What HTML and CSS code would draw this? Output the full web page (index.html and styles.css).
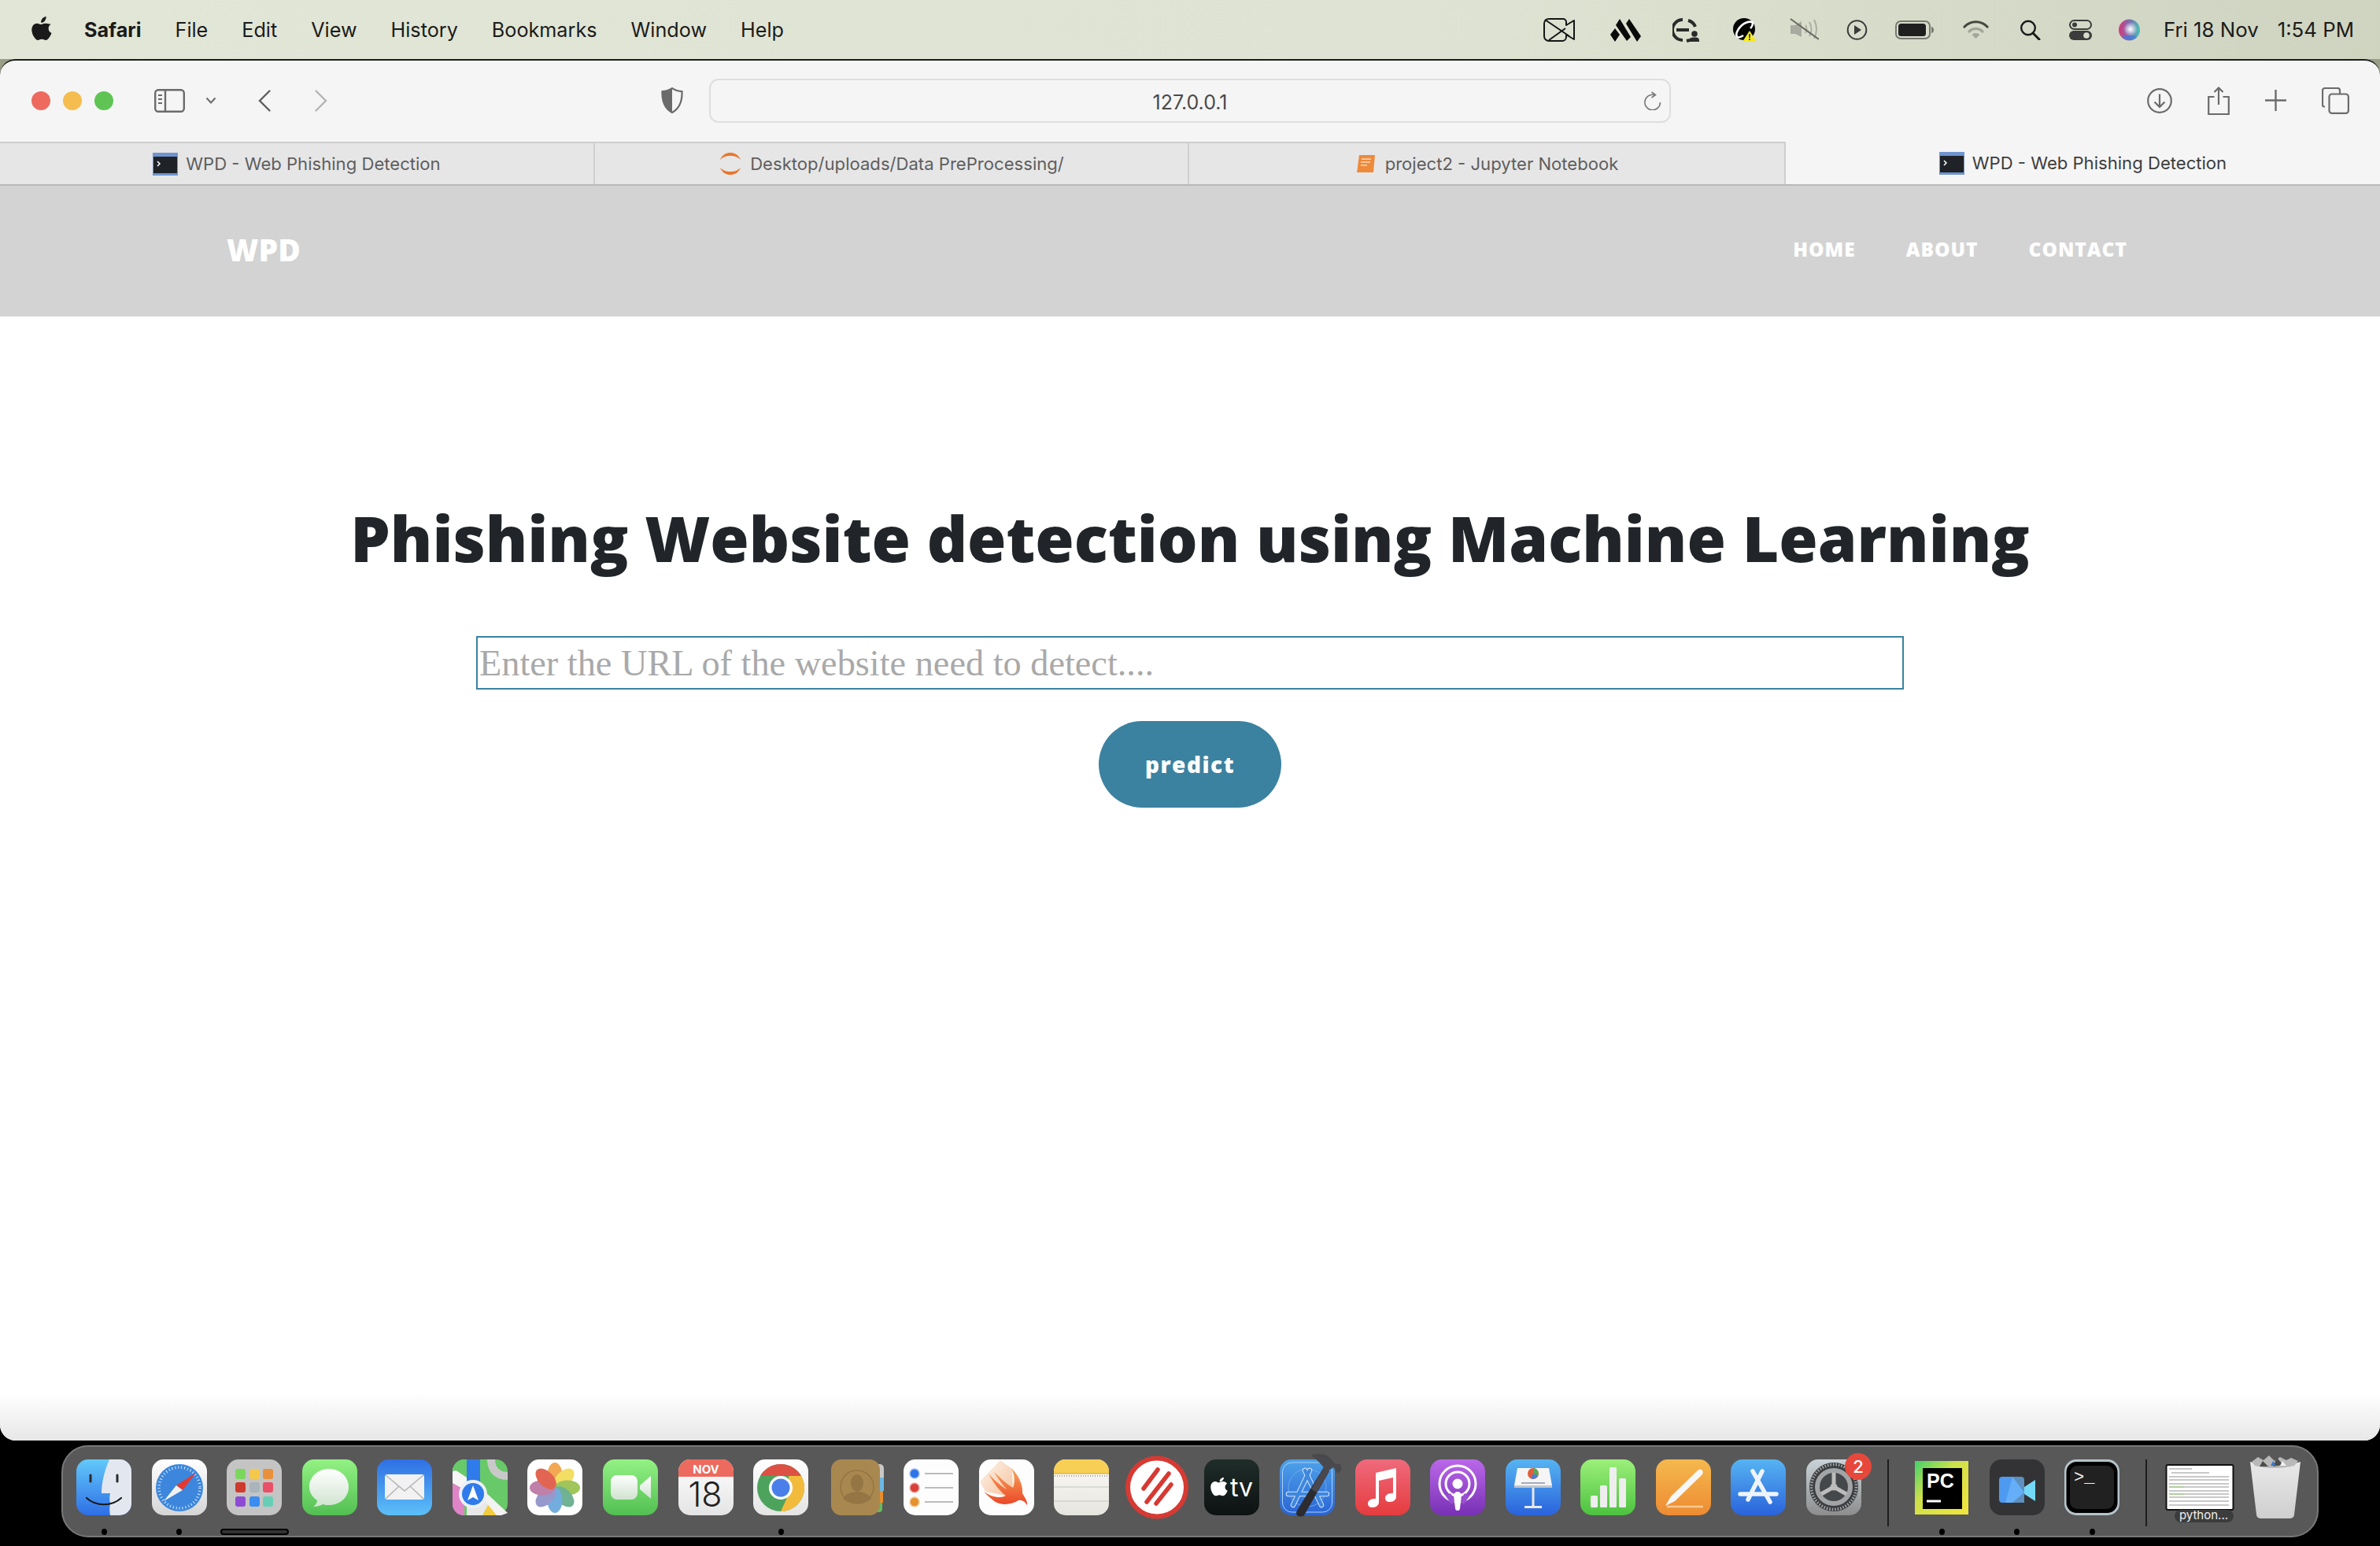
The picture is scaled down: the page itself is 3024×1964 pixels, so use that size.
FILE: index.html
```html
<!DOCTYPE html>
<html lang="en">
<head>
    <meta charset="UTF-8">
    <meta name="viewport" content="width=device-width, initial-scale=1.0">
    <title>WPD - Web Phishing Detection</title>
    <link rel="stylesheet" href="styles.css">
</head>
<body>
    <svg class="svg-defs" aria-hidden="true">
        <defs>
            <linearGradient id="g-finder" x1="0" y1="0" x2="0" y2="1"><stop offset="0" stop-color="#63c9fa"/><stop offset="1" stop-color="#2e6fe6"/></linearGradient>
            <linearGradient id="g-mail" x1="0" y1="0" x2="0" y2="1"><stop offset="0" stop-color="#2f6fe4"/><stop offset="1" stop-color="#5cc0f8"/></linearGradient>
            <linearGradient id="g-green" x1="0" y1="0" x2="0" y2="1"><stop offset="0" stop-color="#93f283"/><stop offset="1" stop-color="#52bf52"/></linearGradient>
            <linearGradient id="g-bubble" x1="0" y1="0" x2="0" y2="1"><stop offset="0" stop-color="#ffffff"/><stop offset="1" stop-color="#cfe3cf"/></linearGradient>
            <linearGradient id="g-white" x1="0" y1="0" x2="0" y2="1"><stop offset="0" stop-color="#ffffff"/><stop offset="1" stop-color="#e4e4e4"/></linearGradient>
            <linearGradient id="g-safari" x1="0" y1="0" x2="0" y2="1"><stop offset="0" stop-color="#ffffff"/><stop offset="1" stop-color="#d5d5d5"/></linearGradient>
            <linearGradient id="g-blue" x1="0" y1="0" x2="0" y2="1"><stop offset="0" stop-color="#56b4f2"/><stop offset="1" stop-color="#2a63dc"/></linearGradient>
            <linearGradient id="g-music" x1="0" y1="0" x2="0" y2="1"><stop offset="0" stop-color="#ef6a7c"/><stop offset="1" stop-color="#e53c3e"/></linearGradient>
            <linearGradient id="g-pod" x1="0" y1="0" x2="0" y2="1"><stop offset="0" stop-color="#bb68ea"/><stop offset="1" stop-color="#7830b4"/></linearGradient>
            <linearGradient id="g-num" x1="0" y1="0" x2="0" y2="1"><stop offset="0" stop-color="#9cf07a"/><stop offset="1" stop-color="#4cc23f"/></linearGradient>
            <linearGradient id="g-pages" x1="0" y1="0" x2="0" y2="1"><stop offset="0" stop-color="#f5b94e"/><stop offset="1" stop-color="#ee8b32"/></linearGradient>
            <linearGradient id="g-swift" x1="0" y1="0" x2="0" y2="1"><stop offset="0" stop-color="#f8a65a"/><stop offset="1" stop-color="#eb4628"/></linearGradient>
            <linearGradient id="g-swift-fade" x1="0" y1="0" x2="1" y2="1"><stop offset="0" stop-color="#fdf4ee"/><stop offset="1" stop-color="#f6c49f"/></linearGradient>
            <linearGradient id="g-prefs" x1="0" y1="0" x2="0" y2="1"><stop offset="0" stop-color="#c9d3d8"/><stop offset="1" stop-color="#8d8d8d"/></linearGradient>
            <linearGradient id="g-pc" x1="0" y1="0" x2="1" y2="1"><stop offset="0" stop-color="#3fd26a"/><stop offset=".4" stop-color="#cfe04a"/><stop offset="1" stop-color="#f2e53c"/></linearGradient>
            <linearGradient id="g-tv" x1="0" y1="0" x2="0" y2="1"><stop offset="0" stop-color="#1f2d29"/><stop offset="1" stop-color="#0d1212"/></linearGradient>
            <linearGradient id="g-trash" x1="0" y1="0" x2="0" y2="1"><stop offset="0" stop-color="#e9e9e9"/><stop offset="1" stop-color="#cfcfcf"/></linearGradient>
            <linearGradient id="g-notes" x1="0" y1="0" x2="0" y2="1"><stop offset="0" stop-color="#fbfaf6"/><stop offset="1" stop-color="#e6e5df"/></linearGradient>
            <linearGradient id="g-xcode" x1="0" y1="0" x2="0" y2="1"><stop offset="0" stop-color="#4ea2ea"/><stop offset="1" stop-color="#2a64d4"/></linearGradient>
            <linearGradient id="g-siri" x1="0" y1="0" x2="1" y2="0"><stop offset="0" stop-color="#d8387c"/><stop offset=".5" stop-color="#7e6bb0"/><stop offset="1" stop-color="#48c4b4"/></linearGradient>
            <radialGradient id="g-siri-glow"><stop offset="0" stop-color="#fff"/><stop offset=".35" stop-color="#e5eef5" stop-opacity=".8"/><stop offset="1" stop-color="#e5eef5" stop-opacity="0"/></radialGradient>
        </defs>
    </svg>

    <header class="menubar">
        <div class="menu-left">
            <svg class="apple" viewBox="0 0 26 32"><path fill="#1a1a1a" d="M18.6 1c.2 2.200-.6 4-1.700 5.400-1.200 1.400-3 2.500-4.800 2.300-.2-2 .8-4 1.800-5.200C15.100 2.100 17.100 1.100 18.600 1zM24.800 10.800c-2 1.300-3.200 3.100-3.200 5.400 0 2.700 1.600 4.700 3.900 5.700-.6 1.900-1.500 3.700-2.700 5.400-1.500 2.200-2.900 3.700-4.800 3.700-1.900 0-2.600-1.200-4.900-1.200-2.300 0-3.100 1.200-4.900 1.200-1.900 0-3.200-1.700-4.700-3.800C1.500 24.700.3 21 .3 18c0-5.300 3.400-8.200 6.800-8.200 1.900 0 3.500 1.300 4.800 1.300 1.200 0 3-1.400 5.200-1.400 1.500 0 4.800.5 7.700 1.100z"/></svg>
            <span class="menu-app">Safari</span>
            <span>File</span>
            <span>Edit</span>
            <span>View</span>
            <span>History</span>
            <span>Bookmarks</span>
            <span>Window</span>
            <span>Help</span>
        </div>
        <div class="menu-right">
            <svg width="40" height="30" viewBox="0 0 40 30"><g fill="none" stroke="#151515" stroke-width="2" stroke-linejoin="round"><path d="M7 1H25a4 4 0 0 1 4 4v4L39 3V27L29 21v3a5 5 0 0 1-5 5H7a6 6 0 0 1-6-6V7a6 6 0 0 1 6-6z"/><path d="M2 2 33 23M7 28 28 13"/></g></svg>
            <svg width="39" height="30" viewBox="0 0 39 30"><path fill="#0a0a0a" d="M0 21 6 13 12 21 6 30zM12 1 26 24 21 29 7 9zM24 1 39 23 34 30 20 7z"/></svg>
            <svg width="34" height="32" viewBox="0 0 34 32"><g fill="none" stroke="#2a2a2a" stroke-width="4"><path d="M13 3A13 13 0 0 0 13 29M20 4a13 13 0 0 1 9 8M18 30l4-1"/><path d="M5 16H21"/></g><circle cx="28" cy="21" r="3.800" fill="#2a2a2a"/><path fill="#2a2a2a" d="M21 31c0-5 2-5.500 7-5.500s6 .5 6 5.500z"/></svg>
            <svg width="30" height="31" viewBox="0 0 30 31"><circle cx="14" cy="15" r="14" fill="#050505"/><path fill="none" stroke="#fff" stroke-width="2.600" d="M5 25C2 20 9 10 16 7c5-2 9-2 9 1 0 2-1 4-3 6M5 25c2 1 5 0 8-2"/><path fill="#f4ea2a" d="M21 17 12 31H30z"/><path stroke="#222" stroke-width="1.600" d="M21 21v5M21 27v2"/></svg>
            <svg width="37" height="29" viewBox="0 0 37 29"><path fill="#a9aba1" d="M1 9h6l8-5v20l-8-4H1z"/><g fill="none" stroke="#a9aba1" stroke-width="1.800"><path d="M20 9q3 5 0 10M25 5q5 9 0 18M31 2q6 12 0 24"/></g><path stroke="#65675f" stroke-width="2" d="M1 1 37 27"/></svg>
            <svg width="27" height="26" viewBox="0 0 27 26"><circle cx="13.500" cy="13" r="11.800" fill="none" stroke="#3a3a3a" stroke-width="2"/><path fill="#3a3a3a" d="M10 7l9 6-9 6z"/></svg>
            <svg width="50" height="24" viewBox="0 0 50 24"><rect x="1" y="1" width="43" height="22" rx="6" fill="none" stroke="#77796f" stroke-width="2"/><rect x="4" y="4" width="35" height="16" rx="3.500" fill="#1f1f1f"/><path fill="#77796f" d="M46 8c2 0 3 2 3 4s-1 4-3 4z"/></svg>
            <svg width="33" height="24" viewBox="0 0 33 24"><g fill="none" stroke-linecap="round" stroke-width="3.200"><path stroke="#44463f" d="M2 8a20 20 0 0 1 29 0"/><path stroke="#a3a59a" d="M8 14a12 12 0 0 1 17 0"/></g><path fill="#a3a59a" d="M16.500 23l-5-5a7 7 0 0 1 10 0z"/></svg>
            <svg width="27" height="26" viewBox="0 0 27 26"><circle cx="11" cy="10.500" r="8.800" fill="none" stroke="#1a1a1a" stroke-width="2.400"/><path stroke="#1a1a1a" stroke-width="3" stroke-linecap="round" d="M17 17l8 8"/></svg>
            <svg width="29" height="26" viewBox="0 0 29 26"><rect x="1" y="1" width="27" height="11" rx="5.500" fill="none" stroke="#3c3c3c" stroke-width="2"/><circle cx="7" cy="6.500" r="3" fill="#3c3c3c"/><rect y="14" width="29" height="12" rx="6" fill="#3c3c3c"/><circle cx="22" cy="20" r="3.800" fill="#d6dbca"/></svg>
            <svg width="29" height="28" viewBox="0 0 29 28"><circle cx="14.500" cy="14" r="13.500" fill="url(#g-siri)"/><path fill="#3f7de0" opacity=".7" d="M5 23a13.500 13.500 0 0 0 19 0c-5-3-14-3-19 0z"/><circle cx="16" cy="13" r="9" fill="url(#g-siri-glow)"/></svg>
            <span class="clock">Fri 18 Nov</span>
            <span class="clock">1:54 PM</span>
        </div>
    </header>

    <main class="window">
        <div class="toolbar">
            <div class="toolbar-left">
                <span class="light light-red"></span>
                <span class="light light-yellow"></span>
                <span class="light light-green"></span>
                <svg class="tb-sidebar" width="39" height="30" viewBox="0 0 39 30"><rect x="1.200" y="1.200" width="36.600" height="27.600" rx="4" fill="none" stroke="#6b6b6b" stroke-width="2.400"/><path d="M14 1v28" stroke="#6b6b6b" stroke-width="2.400"/><path d="M5 8h5M5 13h5M5 18h5" stroke="#6b6b6b" stroke-width="2"/></svg>
                <svg class="tb-chevron" width="14" height="9" viewBox="0 0 14 9"><path d="M1.500 1.500 7 7.500l5.500-6" fill="none" stroke="#6b6b6b" stroke-width="2"/></svg>
                <svg class="tb-back" width="16" height="28" viewBox="0 0 16 28"><path d="M14.500 1.500 2 14l12.500 12.500" fill="none" stroke="#5e5e5e" stroke-width="2.400" stroke-linecap="round"/></svg>
                <svg class="tb-forward" width="16" height="28" viewBox="0 0 16 28"><path d="M1.500 1.500 14 14 1.500 26.500" fill="none" stroke="#b4b4b4" stroke-width="2.400" stroke-linecap="round"/></svg>
                <svg class="tb-shield" width="28" height="33" viewBox="0 0 28 33"><path d="M14 1.200C10 3.800 6 5 1.500 5.200 1 18 5 27 14 32c9-5 13-14 12.500-26.800C22 5 18 3.800 14 1.200z" fill="none" stroke="#6b6b6b" stroke-width="2.200"/><path d="M14 1.200C10 3.800 6 5 1.500 5.200 1 18 5 27 14 32z" fill="#6b6b6b"/></svg>
            </div>
            <div class="urlbar">
                <span class="url-text">127.0.0.1</span>
                <svg class="url-reload" width="23" height="24" viewBox="0 0 23 24"><path d="M14 4.500A9.800 9.800 0 1 0 21.500 14" fill="none" stroke="#777" stroke-width="1.600"/><path d="M10.500 1l5 3.500-5 3.500" fill="none" stroke="#777" stroke-width="1.600"/></svg>
            </div>
            <div class="toolbar-right">
                <svg width="32" height="32" viewBox="0 0 32 32"><circle cx="16" cy="16" r="14.800" fill="none" stroke="#6b6b6b" stroke-width="2.200"/><path d="M16 7.500v16M9.500 17.500l6.500 6.500 6.500-6.500" fill="none" stroke="#6b6b6b" stroke-width="2.200"/></svg>
                <svg width="28" height="36" viewBox="0 0 28 36"><path d="M8.500 13H1.200v22h25.600V13h-7.300M14 1.500V23M8.500 7 14 1.500 19.500 7" fill="none" stroke="#6b6b6b" stroke-width="2.200"/></svg>
                <svg width="27" height="27" viewBox="0 0 27 27"><path d="M13.500 0v27M0 13.500h27" stroke="#6b6b6b" stroke-width="2.400"/></svg>
                <svg width="35" height="34" viewBox="0 0 35 34"><path d="M4 24.500H3a2 2 0 0 1-2-2V4a3 3 0 0 1 3-3h16a3 3 0 0 1 3 3v4" fill="none" stroke="#6b6b6b" stroke-width="2.200"/><rect x="9.500" y="8.500" width="24.400" height="24.400" rx="3.500" fill="none" stroke="#6b6b6b" stroke-width="2.200"/></svg>
            </div>
        </div>

        <div class="tabs">
            <div class="tab">
                <svg class="favicon" width="32" height="29" viewBox="0 0 32 29"><rect width="32" height="29" fill="#6f95cf"/><rect x="1" y="5" width="30" height="21" fill="#1f2226"/><path d="M6 11l3 3-3 3" fill="none" stroke="#fff" stroke-width="1.500"/></svg>
                <span>WPD - Web Phishing Detection</span>
            </div>
            <div class="tab">
                <svg class="favicon" width="30" height="30" viewBox="0 0 30 30"><path d="M2 10C5 3 10 1 15 1s10 2 13 9C24 6 20 5 15 5S6 6 2 10zM2 20c3 7 8 9 13 9s10-2 13-9c-4 4-8 5-13 5S6 24 2 20z" fill="#e9772d"/></svg>
                <span>Desktop/uploads/Data PreProcessing/</span>
            </div>
            <div class="tab">
                <svg class="favicon" width="28" height="28" viewBox="0 0 28 28"><path d="M5 3h20l-2 22H2z" fill="#ee8a3c"/><path d="M8 8h12M7 12h12M7 16h8" stroke="#fbd9b7" stroke-width="1.500"/></svg>
                <span>project2 - Jupyter Notebook</span>
            </div>
            <div class="tab tab-active">
                <svg class="favicon" width="32" height="29" viewBox="0 0 32 29"><rect width="32" height="29" fill="#6f95cf"/><rect x="1" y="5" width="30" height="21" fill="#1f2226"/><path d="M6 11l3 3-3 3" fill="none" stroke="#fff" stroke-width="1.500"/></svg>
                <span>WPD - Web Phishing Detection</span>
            </div>
        </div>

        <div class="page">
            <nav class="site-nav">
                <a class="brand" href="#">WPD</a>
                <div class="nav-links">
                    <a href="#">HOME</a>
                    <a href="#">ABOUT</a>
                    <a href="#">CONTACT</a>
                </div>
            </nav>
            <section class="hero">
                <h1>Phishing Website detection using Machine Learning</h1>
                <form class="predict-form">
                    <input type="text" placeholder="Enter the URL of the website need to detect....">
                    <button type="button">predict</button>
                </form>
            </section>
        </div>
    </main>

    <footer class="dock-area">
        <div class="dock">
            <div class="dock-item">
                <svg class="dock-icon" viewBox="0 0 70 71"><rect width="70" height="71" rx="15" fill="url(#g-finder)"/><path d="M42 0h13a15 15 0 0 1 15 15v41a15 15 0 0 1-15 15H43c-1-5-1-10 0-15-1-4-1-9 0-13h-11c0-14 4-29 10-43z" fill="#e3e8f0"/><path d="M18 20v8M52 20v8" stroke="#2a2a2a" stroke-width="3" stroke-linecap="round"/><path d="M13 49c12 11 32 11 44 0" fill="none" stroke="#1a1a1a" stroke-width="2.200" stroke-linecap="round"/></svg>
                <span class="dot"></span>
            </div>
            <div class="dock-item">
                <svg class="dock-icon" viewBox="0 0 70 71"><rect width="70" height="71" rx="15" fill="url(#g-safari)"/><circle cx="35" cy="36" r="30" fill="#3c87dd"/><circle cx="35" cy="36" r="26" fill="none" stroke="#d8e8f8" stroke-width="3.500" stroke-dasharray="1 3"/><path d="M56 17 31 33l8 6z" fill="#e6392f"/><path d="M15 53 31 33l8 6z" fill="#f2f2f2"/></svg>
                <span class="dot"></span>
            </div>
            <div class="dock-item">
                <svg class="dock-icon" viewBox="0 0 70 71"><rect width="70" height="71" rx="15" fill="#c4c4c4"/><g><rect x="11" y="12" width="13" height="13" rx="3" fill="#7bd75c"/><rect x="29" y="12" width="13" height="13" rx="3" fill="#f4c84a"/><rect x="46" y="12" width="13" height="13" rx="3" fill="#e8903a"/><rect x="11" y="29" width="13" height="13" rx="3" fill="#cf3a2e"/><rect x="29" y="29" width="13" height="13" rx="3" fill="#aab4ba"/><rect x="46" y="29" width="13" height="13" rx="3" fill="#e94f66"/><rect x="11" y="47" width="13" height="13" rx="3" fill="#8e4ad4"/><rect x="29" y="47" width="13" height="13" rx="3" fill="#3a8cf0"/><rect x="46" y="47" width="13" height="13" rx="3" fill="#66ceb4"/></g></svg>
                <span class="launch-bar"></span>
            </div>
            <div class="dock-item">
                <svg class="dock-icon" viewBox="0 0 70 71"><rect width="70" height="71" rx="15" fill="url(#g-green)"/><path d="M34 12c14 0 25 10 25 23S48 58 34 58c-3 0-5 0-8-1-3 2-7 3-12 3 3-2 5-5 5-8-6-4-10-10-10-17 0-13 11-23 25-23z" fill="url(#g-bubble)"/></svg>
            </div>
            <div class="dock-item">
                <svg class="dock-icon" viewBox="0 0 70 71"><rect width="70" height="71" rx="15" fill="url(#g-mail)"/><rect x="10" y="19" width="50" height="32" rx="3" fill="#f2f2f2"/><path d="M11 20l24 20 24-20M11 50l17-16M59 50 42 34" fill="none" stroke="#b4b4b4" stroke-width="1.500"/></svg>
            </div>
            <div class="dock-item">
                <svg class="dock-icon" viewBox="0 0 70 71"><rect width="70" height="71" rx="15" fill="#68c968"/><path d="M0 30 15 38 15 71H14A14 14 0 0 1 0 57z" fill="#e084c7"/><path d="M0 11 18 23V40L0 30z" fill="#f6f6f6"/><path d="M0 15A15 15 0 0 1 15 0h3V12z" fill="#68c968"/><path d="M18 0H35V30H18z" fill="#2f7bec"/><path d="M34 44 62 71H18V50z" fill="#e8e8e8"/><path d="M38 71H62L46 56z" fill="#f2cb3f"/><path d="M44 0c0 14 8 26 26 26V16C60 16 54 10 54 0z" fill="#c9c9c9"/><path d="M62 71h-6L34 44l4-6 32 30z" fill="#f2f2f2"/><circle cx="26" cy="44" r="18" fill="#ecf0f6"/><circle cx="26" cy="44" r="14" fill="#2f7bec"/><path d="M26 33l7 19-7-4-7 4z" fill="#fff"/></svg>
            </div>
            <div class="dock-item">
                <svg class="dock-icon" viewBox="0 0 70 71"><rect width="70" height="71" rx="15" fill="#fff"/><g transform="translate(35 36)" opacity=".85"><ellipse cy="-16" rx="9.500" ry="16" fill="#f29a37"/><ellipse cy="-16" rx="9.500" ry="16" fill="#f2d94a" transform="rotate(45)"/><ellipse cy="-16" rx="9.500" ry="16" fill="#8fbb3f" transform="rotate(90)"/><ellipse cy="-16" rx="9.500" ry="16" fill="#57a582" transform="rotate(135)"/><ellipse cy="-16" rx="9.500" ry="16" fill="#5b9fd9" transform="rotate(180)"/><ellipse cy="-16" rx="9.500" ry="16" fill="#8488c4" transform="rotate(225)"/><ellipse cy="-16" rx="9.500" ry="16" fill="#b46b9b" transform="rotate(270)"/><ellipse cy="-16" rx="9.500" ry="16" fill="#dd4a34" transform="rotate(315)"/></g></svg>
            </div>
            <div class="dock-item">
                <svg class="dock-icon" viewBox="0 0 70 71"><rect width="70" height="71" rx="15" fill="url(#g-green)"/><rect x="10" y="20" width="34" height="31" rx="8" fill="url(#g-bubble)"/><path d="M47 33l14-12v29L47 38z" fill="url(#g-bubble)"/></svg>
            </div>
            <div class="dock-item">
                <svg class="dock-icon" viewBox="0 0 70 71"><rect width="70" height="71" rx="15" fill="url(#g-white)"/><path d="M0 22V15A15 15 0 0 1 15 0h40a15 15 0 0 1 15 15v7z" fill="#ec6a5e"/><text class="cal-month" x="35" y="18" text-anchor="middle">NOV</text><text class="cal-day" x="34" y="60" text-anchor="middle">18</text></svg>
            </div>
            <div class="dock-item">
                <svg class="dock-icon" viewBox="0 0 70 71"><rect width="70" height="71" rx="15" fill="url(#g-white)"/><circle cx="35" cy="36" r="30" fill="#4da35c"/><path d="M9 21A30 30 0 0 1 61 21H35z" fill="#dd5144"/><path d="M61 21a30 30 0 0 1-26 45L46 42l-1-21z" fill="#f3bb3c"/><circle cx="35" cy="36" r="15" fill="#fff"/><circle cx="35" cy="36" r="11.500" fill="#4a7fea"/></svg>
                <span class="dot"></span>
            </div>
            <div class="dock-item">
                <svg class="dock-icon" viewBox="0 0 70 71"><path d="M60 6h5a5 5 0 0 1 5 5v12H60z" fill="#c8c8c8"/><path d="M60 23h10v17H60z" fill="#6bb8e8"/><path d="M60 40h9v15H60z" fill="#ea8d2d"/><path d="M60 55h8v8a4 4 0 0 1-4 4h-4z" fill="#5fbe5f"/><rect x="3" width="62" height="71" rx="13" fill="#a98850"/><circle cx="36" cy="35" r="21" fill="none" stroke="#947543" stroke-width="1.500"/><ellipse cx="36" cy="30" rx="8" ry="11" fill="#947543"/><path d="M18 50c6-12 30-12 36 0-10 8-26 8-36 0z" fill="#947543"/></svg>
            </div>
            <div class="dock-item">
                <svg class="dock-icon" viewBox="0 0 70 71"><rect width="70" height="71" rx="15" fill="#fdfdfd"/><circle cx="14" cy="18" r="6" fill="#2d74e8" stroke="#9dbdf4" stroke-width="1.500"/><circle cx="14" cy="36" r="6" fill="#d94138" stroke="#f0aca7" stroke-width="1.500"/><circle cx="14" cy="54" r="6" fill="#e49330" stroke="#f3cf9f" stroke-width="1.500"/><path d="M27 18h36M27 36h36M27 54h36" stroke="#bcbcbc" stroke-width="1.800"/></svg>
            </div>
            <div class="dock-item">
                <svg class="dock-icon" viewBox="0 0 70 71"><rect width="70" height="71" rx="15" fill="#fdfdfd"/><path d="M27 1 42 12 43 36 34 46 8 41 1 28z" fill="url(#g-swift-fade)"/><path d="M41 11C50 20 56 32 55 43 58 48 62 54 61 58 58 53 54 51 50 52 42 57 28 60 18 52 13 48 9 44 6 41 16 48 27 50 34 46 26 40 18 30 12 18 20 27 28 34 35 38 29 31 23 23 19 16 27 24 36 32 43 36 46 28 45 19 41 11z" fill="url(#g-swift)"/></svg>
            </div>
            <div class="dock-item">
                <svg class="dock-icon" viewBox="0 0 70 71"><rect width="70" height="71" rx="15" fill="url(#g-notes)"/><path d="M0 18V15A15 15 0 0 1 15 0h40a15 15 0 0 1 15 15v3z" fill="#f7cf55"/><path d="M0 18h70" stroke="#bfa93e" stroke-width="1"/><path d="M0 35h70M0 53h70" stroke="#d4d4ce" stroke-width="1.500"/><path d="M1 21h68" stroke="#aaa" stroke-width="2" stroke-dasharray="1 2"/></svg>
            </div>
            <div class="dock-item">
                <svg class="dock-icon" viewBox="0 0 70 71"><ellipse cx="35" cy="35.500" rx="37" ry="37" fill="#fff" stroke="#d63a33" stroke-width="6"/><path d="M18 37 36 13M22 54 50 18M34 56 53 32" stroke="#d63a33" stroke-width="5.500" stroke-linecap="round"/></svg>
            </div>
            <div class="dock-item">
                <svg class="dock-icon" viewBox="0 0 70 71"><rect width="70" height="71" rx="15" fill="url(#g-tv)"/><g transform="translate(-5 -7) scale(1.300)"><path d="M23 23c.2 2-1.800 4.300-4 4.100-.3-2.200 1.800-4.100 4-4.100zM18 28c1.300 0 2.500-1 4.400-1 1.300 0 3 .7 3.800 2-2.800 1.900-2.400 5.700.5 7-.9 2.500-2.800 5-4.400 5-1.400 0-2-.9-3.500-.9-1.600 0-2.300.9-3.600.9-2.500 0-5-5-5-8.500 0-3.700 2.500-5.600 4.600-5.600 1.300 0 2.300 1.100 3.200 1.100z" fill="#fff"/></g><text class="tv-label" x="33" y="47">tv</text></svg>
            </div>
            <div class="dock-item">
                <svg class="dock-icon" viewBox="0 0 70 71"><rect width="70" height="71" rx="15" fill="url(#g-xcode)"/><rect x="3.500" y="4" width="63" height="63" rx="12" fill="none" stroke="#a9d2f6" stroke-width="1"/><circle cx="35" cy="36" r="24" fill="none" stroke="#6da8e8" stroke-width="1"/><path d="M32 14l21 44M38 14 17 58M11 44h49" stroke="#cfe4f9" stroke-width="6.500" stroke-linecap="round" fill="none"/><path d="M32 14l21 44M38 14 17 58M11 44h49" stroke="#3f87de" stroke-width="4.500" stroke-linecap="round" fill="none"/><path d="M56 10 63 15 31 71Q27 74 22 71 20 68 22 65z" fill="#2b2b30"/><path d="M56 10 63 15 47 42 40 38z" fill="#48484e"/><path d="M40-5C46-8 54-8 60-5 65-2 68 3 71 6L77 6 79 13 74 18 68 10 60 16C56 10 50 2 40-5z" fill="#4a4a4e"/></svg>
            </div>
            <div class="dock-item">
                <svg class="dock-icon" viewBox="0 0 70 71"><rect width="70" height="71" rx="15" fill="url(#g-music)"/><path d="M26 17 52 11v36c0 4-3 7-8 7-4 0-6-2-6-5s3-6 8-6l2-.3V23l-18 4v27c0 4-3 7-8 7-4 0-6-2-6-5s3-6 8-6l2-.3z" fill="#fff"/></svg>
            </div>
            <div class="dock-item">
                <svg class="dock-icon" viewBox="0 0 70 71"><rect width="70" height="71" rx="15" fill="url(#g-pod)"/><circle cx="35" cy="31" r="23" fill="none" stroke="#fff" stroke-width="3"/><circle cx="35" cy="31" r="15" fill="none" stroke="#fff" stroke-width="3"/><path d="M23 45l7 10M47 45l-7 10" stroke="#9a4fd0" stroke-width="7"/><circle cx="35" cy="31" r="6.500" fill="#fff"/><path d="M30 46a5 5 0 0 1 10 0l-2 16a3 3 0 0 1-6 0z" fill="#fff"/></svg>
            </div>
            <div class="dock-item">
                <svg class="dock-icon" viewBox="0 0 70 71"><rect width="70" height="71" rx="15" fill="url(#g-blue)"/><path d="M15 11h40l4 22H11z" fill="#f5f5f5"/><path d="M11 33h48v3H11z" fill="#bfc6d0"/><path d="M20 30h30" stroke="#8893a6" stroke-width="1.500"/><circle cx="35" cy="18" r="7" fill="#e35d3a"/><path d="M35 18V11a7 7 0 0 1 6 10z" fill="#5aa85a"/><path d="M35 18l6 3a7 7 0 0 1-9 3z" fill="#4a7fd8"/><path d="M33.500 36h3v24h-3z" fill="#e8e8e8"/><path d="M24 59h22v3H24z" fill="#e8e8e8"/></svg>
            </div>
            <div class="dock-item">
                <svg class="dock-icon" viewBox="0 0 70 71"><rect width="70" height="71" rx="15" fill="url(#g-num)"/><rect x="13" y="46" width="9" height="15" rx="1.500" fill="#eee"/><rect x="25" y="33" width="9" height="28" rx="1.500" fill="#eee"/><rect x="37" y="10" width="9" height="51" rx="1.500" fill="#eee"/><rect x="49" y="24" width="9" height="37" rx="1.500" fill="#eee"/></svg>
            </div>
            <div class="dock-item">
                <svg class="dock-icon" viewBox="0 0 70 71"><rect width="70" height="71" rx="15" fill="url(#g-pages)"/><path d="M59 14c-2-2-4-2-6 0L19 47l-7 12 12-6 34-33c2-2 2-4 1-6z" fill="#f7f7f7"/><path d="M14 60h46" stroke="#f8c98f" stroke-width="2.500"/></svg>
            </div>
            <div class="dock-item">
                <svg class="dock-icon" viewBox="0 0 70 71"><rect width="70" height="71" rx="15" fill="url(#g-blue)"/><path d="M28 15l22 39M40 15 22 51M12 44h46" stroke="#eef4fb" stroke-width="5.500" stroke-linecap="round" fill="none"/></svg>
            </div>
            <div class="dock-item">
                <svg class="dock-icon" viewBox="0 0 70 71"><rect width="70" height="71" rx="15" fill="url(#g-prefs)"/><circle cx="35" cy="35" r="31" fill="#3c3f42"/><circle cx="35" cy="35" r="28.500" fill="none" stroke="#a8a8a8" stroke-width="3.500" stroke-dasharray="1.500 2"/><circle cx="35" cy="35" r="24" fill="#a2a4a6"/><circle cx="35" cy="35" r="18" fill="#45484b"/><path d="M35 35V17M35 35 19 44M35 35l16 9" stroke="#bcbcbc" stroke-width="5"/><circle cx="35" cy="35" r="4.500" fill="#bcbcbc"/><circle cx="66" cy="9" r="17" fill="#e7483c"/><text class="badge-num" x="66" y="17" text-anchor="middle">2</text></svg>
            </div>
            <span class="dock-sep"></span>
            <div class="dock-item">
                <svg class="dock-icon" viewBox="0 0 70 71"><rect width="68" height="68" x="1" y="2" fill="url(#g-pc)"/><rect x="11" y="11" width="50" height="52" fill="#000"/><text class="pc-label" x="16" y="36">PC</text><path d="M16 53h18" stroke="#fff" stroke-width="3"/></svg>
                <span class="dot"></span>
            </div>
            <div class="dock-item">
                <svg class="dock-icon" viewBox="0 0 70 71"><rect width="70" height="71" rx="15" fill="#333335"/><path d="M12 26a4 4 0 0 1 4-4h13l15 20-15 13H16a4 4 0 0 1-4-4z" fill="#4e9af0"/><path d="M29 22h11a4 4 0 0 1 4 4v29H20z" fill="#6fb7fb" opacity=".7"/><path d="M44 35l14-9v27L44 44z" fill="#74d9f8"/></svg>
                <span class="dot"></span>
            </div>
            <div class="dock-item">
                <svg class="dock-icon" viewBox="0 0 70 71"><rect width="70" height="71" rx="15" fill="#b5c4cc"/><rect x="2.500" y="3" width="65" height="65" rx="13" fill="#000"/><rect x="7" y="8" width="56" height="55" rx="9" fill="#212121"/><text class="term-label" x="12" y="29">&gt;_</text></svg>
                <span class="dot"></span>
            </div>
            <span class="dock-sep"></span>
            <div class="dock-item">
                <svg class="dock-icon" viewBox="0 0 70 71"><rect x="-7.500" y="7" width="85" height="57" rx="2" fill="#fff" stroke="#111" stroke-width="2"/><g stroke="#777" stroke-width=".8"><path d="M-4 12H25M-1 17H47M-4 22H72M-4 26H72M-4 31H72M-4 35H72M-4 40H72M-4 44H72M-4 48H72M-4 53H72M-4 58H72"/></g><path d="M-4 35H15M-4 44H15" stroke="#9ad06a" stroke-width="1"/><rect x="3" y="64" width="75" height="16" rx="8" fill="#3c3c3c"/><text class="doc-label" x="40" y="76" text-anchor="middle">python...</text></svg>
            </div>
            <div class="dock-item">
                <svg class="dock-icon" viewBox="0 0 70 71"><path d="M3 3C20 9 50 9 67 3L59 70a5 5 0 0 1-5 5H16a5 5 0 0 1-5-5z" fill="url(#g-trash)"/><path d="M5 3 13-3l7 4 7-6 7 7 7-5 8 4 6-3 9 4-5 6c-14 4-36 4-50 0z" fill="#b9b9b9"/><path d="M19 2l7 7-11 0zM37-2l8 9-13 2z" fill="#4c4c4c"/><path d="M32 2l4 6h-7z" fill="#3a78c8"/><path d="M44 2l5 6h-8z" fill="#f2f2f2"/></svg>
            </div>
        </div>
    </footer>
</body>
</html>
```

FILE: styles.css
```css
* {
    box-sizing: border-box;
}
html, body {
    margin: 0;
    height: 1964px;
}
body {
    display: flex;
    flex-direction: column;
    width: 3024px;
    overflow: hidden;
    font-family: Inter, "Liberation Sans", sans-serif;
    background: linear-gradient(#999e87 0, #999e87 110px, #000 110px);
}
.svg-defs {
    display: block;
    width: 0;
    height: 0;
}

/* mac menu bar */
.menubar {
    display: flex;
    justify-content: space-between;
    align-items: center;
    height: 75px;
    padding: 0 33px 0 40px;
    background: linear-gradient(90deg, #e1e6d6, #dfe3d3 60%, #cfd4c1);
    color: #1b1b1b;
    font-size: 25.200px;
    flex-shrink: 0;
}
.menu-left {
    display: flex;
    align-items: center;
    gap: 43px;
}
.apple {
    width: 26px;
    height: 32px;
    margin-top: -4px;
    margin-right: -2px;
}
.menu-app {
    font-weight: 700;
}
.menu-right {
    display: flex;
    align-items: center;
    gap: 36px;
}
.menu-right svg:nth-child(2) {
    margin-left: 9px;
}
.menu-right svg:nth-child(3) {
    margin-left: 4px;
}
.menu-right svg:nth-child(4) {
    margin-left: 7px;
}
.menu-right svg:nth-child(5) {
    margin-left: 6px;
}
.menu-right svg:nth-child(6),
.menu-right svg:nth-child(7) {
    margin-left: -1px;
}
.menu-right svg:nth-child(9) {
    margin-left: 3px;
}
.menu-right svg:nth-child(11) {
    margin-left: -3px;
}
.clock {
    font-size: 25.800px;
    margin-left: -7px;
}
.clock + .clock {
    margin-left: -12px;
}

/* safari */
.window {
    flex: 1;
    display: flex;
    flex-direction: column;
    min-height: 0;
    border-top: 2px solid #1c1c1c;
    border-radius: 20px;
    overflow: hidden;
    background: #f5f5f5;
}
.toolbar {
    display: grid;
    grid-template-columns: 1fr 1222px 1fr;
    align-items: center;
    height: 103px;
    padding-bottom: 2px;
    flex-shrink: 0;
}
.toolbar-left {
    display: flex;
    align-items: center;
    padding-left: 40px;
}
.light {
    width: 24px;
    height: 24px;
    border-radius: 50%;
    margin-right: 16px;
}
.light-red {
    background: #ee6a5f;
}
.light-yellow {
    background: #f5bd4f;
}
.light-green {
    background: #5fc454;
}
.tb-sidebar {
    margin-left: 36px;
}
.tb-chevron {
    margin-left: 26px;
}
.tb-back {
    margin-left: 53px;
}
.tb-forward {
    margin-left: 56px;
}
.tb-shield {
    margin-left: auto;
    margin-right: 33px;
}
.urlbar {
    position: relative;
    display: flex;
    justify-content: center;
    align-items: center;
    height: 56px;
    padding-top: 4px;
    border: 2px solid #dedede;
    border-radius: 12px;
    font-size: 25px;
    color: #4a4a4a;
}
.url-reload {
    position: absolute;
    right: 10px;
    top: 14px;
}
.toolbar-right {
    display: flex;
    align-items: center;
    justify-content: flex-end;
    gap: 45px;
    padding-right: 39px;
}
.tabs {
    display: grid;
    grid-template-columns: 756px 755px 758px 1fr;
    height: 56px;
    flex-shrink: 0;
    border-bottom: 2px solid #b9b9b9;
    font-size: 22.100px;
    color: #5e5e5e;
}
.tab {
    display: flex;
    align-items: center;
    justify-content: center;
    gap: 10px;
    background: #e6e6e6;
    border-top: 2px solid #cdcdcd;
    border-right: 2px solid #cfcfcf;
}
.tab-active {
    background: #f5f5f5;
    border-top: none;
    border-right: none;
    color: #3d3d3d;
}

/* the page itself */
.page {
    flex: 1;
    background: linear-gradient(#fff calc(100% - 60px), #e7e7e7);
    font-family: "Open Sans", sans-serif;
}
.site-nav {
    display: flex;
    justify-content: space-between;
    align-items: center;
    height: 166px;
    padding: 0 321px 5px 288px;
    background-color: #d3d3d3;
}
.site-nav a {
    color: #fff;
    text-decoration: none;
    font-weight: 800;
}
.brand {
    font-size: 39px;
}
.nav-links {
    display: flex;
    gap: 64px;
}
.nav-links a {
    font-size: 24.500px;
    letter-spacing: 1px;
}
.hero {
    padding-top: 233px;
    text-align: center;
}
h1 {
    margin: 0;
    font-size: 80px;
    line-height: 96px;
    font-weight: 800;
    color: #212529;
}
.predict-form {
    display: flex;
    flex-direction: column;
    align-items: center;
    gap: 40px;
    margin-top: 77px;
}
input {
    width: 1814px;
    height: 68px;
    padding: 0 2px;
    border: 2px solid #3b82a0;
    outline: none;
    font-family: "Liberation Serif", serif;
    font-size: 46.300px;
}
input::placeholder {
    color: #a9a9a9;
}
button {
    width: 232px;
    height: 110px;
    border: none;
    border-radius: 55px;
    background-color: #3b82a0;
    color: #fff;
    font-family: "Open Sans", sans-serif;
    font-size: 28px;
    font-weight: 800;
    letter-spacing: 1.500px;
    cursor: pointer;
}

/* dock */
.dock-area {
    height: 134px;
    flex-shrink: 0;
    padding: 6px 0 0 78px;
    background: #000;
}
.dock {
    display: flex;
    align-items: flex-start;
    gap: 25.570px;
    width: 2868px;
    height: 117px;
    padding: 16px 0 0 17px;
    background: #585858;
    border: 2px solid #787878;
    border-radius: 34px;
}
.dock-item {
    display: flex;
    flex-direction: column;
    align-items: center;
    width: 70px;
    flex-shrink: 0;
}
.dock-icon {
    display: block;
    width: 70px;
    height: 71px;
    overflow: visible;
}
.dot {
    width: 7px;
    height: 8px;
    margin-top: 17px;
    border-radius: 50%;
    background: #000;
}
.launch-bar {
    width: 87px;
    height: 8px;
    margin-top: 17px;
    border: 2px solid #000;
    border-radius: 4px;
    background: #333;
}
.dock-sep {
    flex-shrink: 0;
    width: 2px;
    height: 85px;
    margin: 0 7px;
    background: #1d1d1d;
}

/* text inside the dock icons */
.cal-month {
    font: 700 15px Inter, sans-serif;
    fill: #fff;
}
.cal-day {
    font: 300 43px Inter, sans-serif;
    fill: #222;
}
.tv-label {
    font: 400 32px Inter, sans-serif;
    fill: #fff;
}
.badge-num {
    font: 500 22px Inter, sans-serif;
    fill: #fff;
}
.pc-label {
    font: 700 25px "Liberation Sans", sans-serif;
    fill: #fff;
}
.term-label {
    font: 400 22px "Liberation Mono", monospace;
    fill: #f2f2f2;
}
.doc-label {
    font: 400 15px Inter, sans-serif;
    fill: #eee;
}
```
